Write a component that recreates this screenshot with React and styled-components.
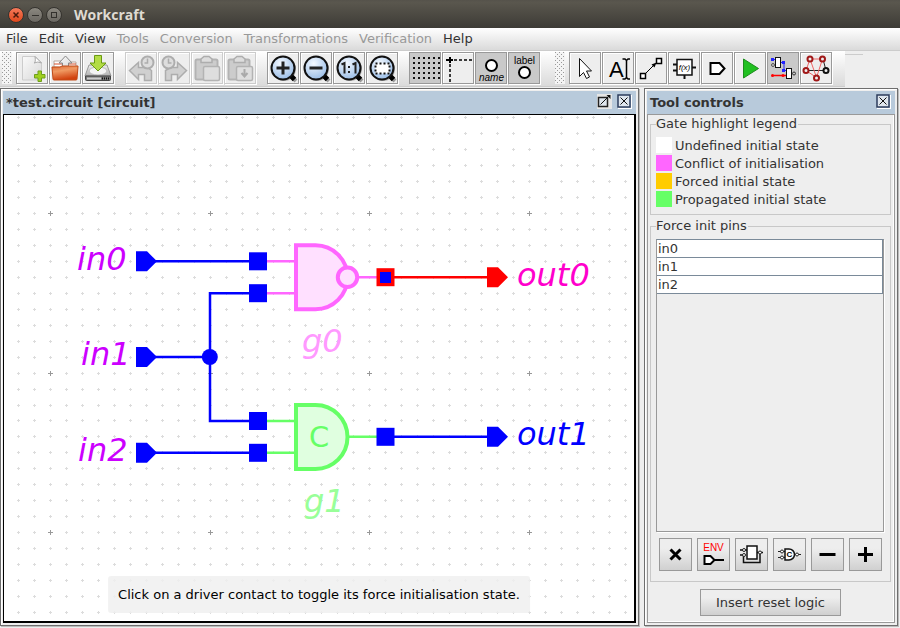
import React from "react";
import styled, { createGlobalStyle, css } from "styled-components";

const GlobalStyle = createGlobalStyle`
  *, *::before, *::after { box-sizing: border-box; }
  html, body { margin: 0; height: 100%; }
  #root { height: 100%; }
  body { font: 13px/16px "DejaVu Sans", sans-serif; color: #333; background: #eee; }
  button { font: inherit; color: inherit; margin: 0; padding: 0; }
`;

const Shell = styled.div`
  display: flex;
  flex-direction: column;
  height: 100vh;
  min-height: 560px;
  overflow: hidden;
`;

/* ---------- title bar ---------- */

const TitleBar = styled.header`
  display: flex;
  align-items: center;
  flex: none;
  height: 28px;
  padding: 1px 8px 0;
  background: linear-gradient(#55524b, #5a574e 8%, #3d3b36);
`;
const WindowControls = styled.div`
  display: flex;
  gap: 3px;
  margin-right: 12px;
`;
const RoundButton = styled.button`
  display: flex;
  width: 16px;
  height: 16px;
  border: 1px solid #35332f;
  border-radius: 50%;
  background: ${(p) => (p.$close ? "linear-gradient(#f5795a, #e0481c)" : "linear-gradient(#8b8880, #6b6862)")};
`;
const AppTitle = styled.h1`
  margin: 0;
  font: bold 14px/20px "Open Sans", "Noto Sans", sans-serif;
  color: #dfdbd2;
`;

/* ---------- menu ---------- */

const MenuBar = styled.nav`
  display: flex;
  flex: none;
  height: 23px;
  padding-left: 1px;
  background: linear-gradient(#fff, #dadada);
  border-bottom: 1px solid #ccc;
`;
const MenuItem = styled.button`
  border: 0;
  padding: 0 6px 0 5px;
  background: none;
  color: #333;
  &:disabled { color: #999; }
`;

/* ---------- tool bars ---------- */

const ToolArea = styled.div`
  display: flex;
  flex: none;
  height: 36px;
  margin-bottom: 1px;
`;
const ToolBar = styled.div`
  display: flex;
  align-items: flex-start;
  height: 36px;
  padding: 1px 13px 0 2px;
  background: linear-gradient(#fff, #dadada);
  border-bottom: 1px solid #ccc;
`;
const ToolRest = styled.div`
  width: 18px;
  height: 4px;
  border-bottom: 1px solid #ccc;
`;
const Grip = styled.div`
  width: 10px;
  height: 32px;
  margin-right: 4px;
  background:
    linear-gradient(#aaa, #aaa) 0 0 / 1px 1px,
    #f4f4f4;
  background:
    conic-gradient(from 270deg at 1px 1px, #999 90deg, transparent 0) 0 0 / 4px 4px,
    conic-gradient(from 270deg at 1px 1px, #999 90deg, transparent 0) 2px 2px / 4px 4px,
    #f4f4f4;
`;
const ToolGroup = styled.div`
  display: flex;
  gap: 1px;
  & + & { margin-left: 11px; }
`;
const ToolButton = styled.button`
  display: block;
  width: 32px;
  height: 32px;
  border: 1px solid #999;
  background: ${(p) => (p.$on ? "#c9c9c9" : "#eee")};
  box-shadow: 1px 1px 0 #fff ${(p) => !p.$on && css`, inset 1px 1px 0 #fff`};
  &:disabled { border-color: #ccc; }
  & > svg { display: block; }
`;

/* ---------- windows ---------- */

const Desktop = styled.main`
  display: flex;
  flex: 1;
  min-height: 0;
  gap: 5px;
  padding: 0 2px 2px 0;
`;
const Pane = styled.section`
  display: flex;
  flex-direction: column;
  min-width: 0;
  flex: ${(p) => (p.$side ? "0 0 254px" : "1")};
  padding: 2px;
  border: 1px solid #6e6e6e;
  background: #eee;
  box-shadow: 1px 1px 0 #bbb, inset 1px 1px 0 #fff;
`;
const PaneHeader = styled.header`
  display: flex;
  align-items: center;
  gap: 5px;
  flex: none;
  height: 23px;
  padding: 0 4px 2px 3px;
  background: #b8cadb;
`;
const PaneTitle = styled.h2`
  flex: 1;
  margin: 0;
  padding-top: 2px;
  font-size: 13px;
  line-height: 18px;
`;
const PaneButton = styled.button`
  width: 15px;
  height: 15px;
  border: 0;
  background: none;
  & > svg { display: block; }
`;
const Canvas = styled.div`
  position: relative;
  flex: 1;
  min-height: 0;
  border: solid #000;
  border-width: 1px 2px 2px 1px;
  background: #fff;
  overflow: hidden;
`;
const Drawing = styled.svg`
  display: block;
  width: 100%;
  height: 100%;
`;
const Label = styled.text`
  font: italic 32px "DejaVu Sans", sans-serif;
`;
const Hint = styled.div`
  position: absolute;
  bottom: 8px;
  left: 50%;
  transform: translateX(-50%);
  padding: 10px 10px 9px;
  border-radius: 3px;
  line-height: 18px;
  white-space: nowrap;
  color: #000;
  background: rgba(240, 240, 240, 0.85);
`;

/* ---------- tool controls ---------- */

const Controls = styled.div`
  display: flex;
  flex-direction: column;
  flex: 1;
  min-height: 0;
  gap: 2px;
  padding: 0 3px 6px 2px;
  border: 1px solid #999;
  box-shadow: inset -1px -1px 0 #fff;
`;
const Group = styled.fieldset`
  display: flex;
  flex-direction: column;
  min-width: 0;
  min-height: 0;
  margin: 0;
  padding: 4px 6px 5px 5px;
  border: 1px solid #c8c8c8;
  ${(p) => p.$grow && css`flex: 1;`}
`;
const GroupTitle = styled.legend`
  padding: 0 1px 0 0;
  line-height: 18px;
`;
const Legend = styled.ul`
  margin: 0;
  padding: 0;
  list-style: none;
`;
const LegendRow = styled.li`
  display: flex;
  gap: 3px;
  height: 18px;
  line-height: 18px;
`;
const Swatch = styled.span`
  width: 16px;
  height: 16px;
  background: ${(p) => p.$color};
`;
const PinList = styled.div`
  flex: 1;
  min-height: 0;
  border: 1px solid #999;
  border-top-color: #7a8a99;
  box-shadow: 1px 1px 0 #fff;
`;
const PinTable = styled.table`
  width: 100%;
  border-spacing: 0;
`;
const PinCell = styled.td`
  height: 18px;
  padding: 1px 1px 0;
  background: #fff;
  border-right: 1px solid #7a8a99;
  border-bottom: 1px solid #7a8a99;
`;
const ActionRow = styled.div`
  display: flex;
  justify-content: center;
  gap: 5px;
  padding: 6px 0 5px;
`;
const Action = styled.button`
  width: 33px;
  height: 33px;
  border: 1px solid #999;
  background: linear-gradient(#eee, #eee 30%, #d0d0d0);
  & > svg { display: block; }
`;
const InsertButton = styled.button`
  align-self: center;
  height: 27px;
  margin-top: 5px;
  padding: 0 15px;
  border: 1px solid #999;
  background: linear-gradient(#eee, #eee 30%, #cfcfcf);
`;

/* ---------- icons ---------- */

const Icon = ({ children }) => (
  <svg width="30" height="30" viewBox="1 1 30 30" fill="none" aria-hidden="true">{children}</svg>
);

const Magnifier = ({ children }) => (
  <Icon>
    <path d="M24 24l5 5" stroke="#999" strokeWidth="4" />
    <circle cx="17" cy="17" r="12" fill="#aaa" />
    <path d="M23 23l4.500 4.500" stroke="#000" strokeWidth="5" />
    <circle cx="16" cy="16" r="11.500" fill="url(#lens)" stroke="#111" strokeWidth="2" />
    {children}
  </Icon>
);

const icons = {
  create: (
    <Icon>
      <path d="M6.500 4.500h13l6 6V28h-19z" fill="url(#paper)" stroke="#ccc" />
      <path d="M19 4.500q1 6-1 6.500 4-2 7.500 0z" fill="#fff" stroke="#aaa" />
      <path d="M22 19h3.500v3.500H29V26h-3.500v3.500H22V26h-3.500v-3.500H22z" fill="#9fd01f" stroke="#6f9f1c" />
    </Icon>
  ),
  open: (
    <Icon>
      <path d="M5 15V9h7l1 1h14v6z" fill="#fff" stroke="#b8a79c" />
      <path d="M5 12h22" stroke="#d9532c" />
      <path d="M13.500 16v-5h-3.500l6.500-7 6.500 7h-3.500v5z" fill="url(#paper)" stroke="#888" />
      <path d="M3 15h8l2-1h16l-1 13q0 1-1 1H5q-1 0-1-1z" fill="url(#folder)" stroke="#c14a17" />
    </Icon>
  ),
  save: (
    <Icon>
      <path d="M7 13h18l4 11H3z" fill="url(#disk)" stroke="#999" />
      <ellipse cx="16" cy="19" rx="9" ry="4" fill="#f4f4f4" stroke="#bbb" />
      <path d="M3.500 24h25v3.500q0 1-1 1h-23q-1 0-1-1z" fill="#777" stroke="#444" />
      <path d="M5 26.500h14" stroke="#ccc" strokeWidth="2" />
      <path d="M20 26.500h7" stroke="#111" strokeWidth="2" strokeDasharray="1 1" />
      <path d="M12.500 3.500h7v7.500h4.500l-8 8-8-8h4.500z" fill="#b3dc45" stroke="#6a9a12" />
    </Icon>
  ),
  undo: (
    <Icon>
      <path d="M4.500 18.500l9-8v5h9l4 3v10h-7v-6h-6v5z" fill="#d0d0d0" stroke="#adadad" strokeWidth="1.500" />
      <circle cx="22.500" cy="10.500" r="6" fill="#ddd" stroke="#adadad" strokeWidth="2" />
      <path d="M22.500 6.500v4.500h-3" stroke="#adadad" strokeWidth="1.500" />
    </Icon>
  ),
  redo: (
    <Icon>
      <path d="M28.500 18.500l-9-8v5h-7l-5 3v10h6v-6h6v5z" fill="#d0d0d0" stroke="#adadad" strokeWidth="1.500" />
      <circle cx="10.500" cy="10.500" r="6" fill="#ddd" stroke="#adadad" strokeWidth="2" />
      <path d="M10.500 6.500v4.500h3" stroke="#adadad" strokeWidth="1.500" />
    </Icon>
  ),
  copy: (
    <Icon>
      <rect x="4.500" y="7.500" width="22" height="20" rx="1.500" fill="#ccc" stroke="#b3b3b3" strokeWidth="2" />
      <path d="M10 10.500V7l3-2.500h5L21 7v3.500z" fill="#ddd" stroke="#adadad" strokeWidth="1.500" />
      <rect x="12.500" y="14.500" width="16" height="14" rx="1.500" fill="#dedede" stroke="#b3b3b3" strokeWidth="1.500" />
    </Icon>
  ),
  paste: (
    <Icon>
      <rect x="4.500" y="7.500" width="21" height="20" rx="1.500" fill="#ccc" stroke="#b3b3b3" strokeWidth="2" />
      <path d="M10 10.500V7l3-2.500h5L21 7v3.500z" fill="#ddd" stroke="#adadad" strokeWidth="1.500" />
      <rect x="12.500" y="14.500" width="16" height="14" rx="1.500" fill="#dedede" stroke="#b3b3b3" strokeWidth="1.500" />
      <path d="M20.500 17v7m-3-3l3 3.500 3-3.500" stroke="#aaa" strokeWidth="2" />
    </Icon>
  ),
  zoomIn: <Magnifier><path d="M9.500 16h13M16 9.500v13" stroke="#222" strokeWidth="3" /></Magnifier>,
  zoomOut: <Magnifier><path d="M9.500 16h13" stroke="#222" strokeWidth="3" /></Magnifier>,
  zoomActual: (
    <Magnifier>
      <path d="M8.500 12.500l3-1.500v10.500M19.500 12.500l3-1.500v10.500" stroke="#222" strokeWidth="2" />
      <path d="M15 14h2v2h-2zM15 19h2v2h-2z" fill="#222" />
    </Magnifier>
  ),
  zoomFit: (
    <Magnifier>
      <rect x="9.500" y="11.500" width="14" height="10" fill="#fff" stroke="#111" strokeWidth="2" strokeDasharray="2 2" />
    </Magnifier>
  ),
  grid: (
    <Icon>
      {[5, 10, 15, 20, 25, 30].map((x) => (
        <path key={x} d={`M${x} 5v25`} stroke="#111" strokeWidth="2" strokeDasharray="2 3" />
      ))}
    </Icon>
  ),
  rulers: (
    <Icon>
      <path d="M12 8h18M8 12v18" stroke="#000" strokeWidth="1.500" strokeDasharray="3 2" />
      <path d="M4 8h7M8 5v6" stroke="#000" strokeWidth="2" />
    </Icon>
  ),
  name: (
    <Icon>
      <circle cx="16.500" cy="13.500" r="5.500" fill="#fff" stroke="#000" strokeWidth="2" />
      <text x="16.500" y="29" textAnchor="middle" fontFamily="Liberation Sans, sans-serif" fontSize="10" fontStyle="italic" fill="#000">name</text>
    </Icon>
  ),
  label: (
    <Icon>
      <circle cx="16.500" cy="20.500" r="5.500" fill="#fff" stroke="#000" strokeWidth="2" />
      <text x="16.500" y="12" textAnchor="middle" fontFamily="Liberation Sans, sans-serif" fontSize="10" fill="#000">label</text>
    </Icon>
  ),
  select: <Icon><path d="M10.500 6.500v18l4-4 3 6 3-1.500-3-6h5z" fill="#fff" stroke="#111" /></Icon>,
  text: (
    <Icon>
      <text x="7" y="25" fontFamily="Liberation Sans, sans-serif" fontSize="22" fill="#000">A</text>
      <path d="M20.500 7h2.500l1.500 1.500L26 7h2M20.500 27h2.500l1.500-1.500L26 27h2M24.500 8v18" stroke="#000" strokeWidth="1.500" />
    </Icon>
  ),
  connect: (
    <Icon>
      <path d="M10 22L23 9" stroke="#000" />
      <path d="M21.500 10.500l-2 5-3-3z" fill="#000" />
      <rect x="5.500" y="21.500" width="5" height="5" fill="#fff" stroke="#000" strokeWidth="1.500" />
      <rect x="21.500" y="6.500" width="5" height="5" fill="#fff" stroke="#000" strokeWidth="1.500" />
    </Icon>
  ),
  component: (
    <Icon>
      <path d="M5 12.500h4M5 18.500h4M24 15.500h4M16.500 23v4" stroke="#111" strokeWidth="2" />
      <rect x="9" y="7.500" width="15" height="15.500" fill="#fff" stroke="#111" strokeWidth="1.500" />
      <text x="16.500" y="18" textAnchor="middle" fontFamily="Liberation Sans, sans-serif" fontSize="8" fontStyle="italic" fill="#000">f(x)</text>
    </Icon>
  ),
  port: <Icon><path d="M9.500 11h9l5 5.500-5 5.500h-9z" fill="#fff" stroke="#000" strokeWidth="2" /></Icon>,
  simulate: <Icon><path d="M9.500 7v19L24.500 16.500z" fill="#20c020" stroke="#1c8c1c" /></Icon>,
  initialise: (
    <Icon>
      <path d="M5.500 7.500h3M14 10.500h3v8h4" stroke="#22f" />
      <path d="M4 6h3v3H4zM15 9h3v3h-3zM15 17h3v3h-3z" fill="#22f" />
      <circle cx="6" cy="13" r="1.500" stroke="#555" />
      <rect x="8.500" y="5.500" width="5" height="10" fill="#fff" stroke="#111" />
      <path d="M5 23.500h14" stroke="red" strokeWidth="1.500" />
      <circle cx="5.500" cy="23.500" r="1.500" fill="red" /><circle cx="16" cy="23.500" r="1.500" fill="red" />
      <rect x="19.500" y="16.500" width="5" height="10" fill="#fff" stroke="#111" />
      <circle cx="27" cy="21.500" r="1.500" stroke="#333" />
    </Icon>
  ),
  cycles: (
    <Icon>
      <path d="M6 18.500h20L23 7" stroke="#222" />
      <path d="M10 7h12.500l-6 18.500L6 18.500 10 7l6.500 18.500" stroke="#e66" />
      <g fill="#eee" stroke="#a01818" strokeWidth="2">
        <circle cx="10" cy="7" r="2.500" /><circle cx="22.500" cy="7" r="2.500" /><circle cx="6" cy="18.500" r="2.500" /><circle cx="16.500" cy="26" r="2.500" />
      </g>
      <circle cx="26" cy="18.500" r="2.500" fill="#eee" stroke="#111" strokeWidth="2" />
    </Icon>
  ),
};

const ActionIcon = ({ children }) => (
  <svg width="31" height="31" viewBox="1 1 31 31" fill="none" aria-hidden="true">{children}</svg>
);

const actions = [
  ["Clear all", <path d="M11.500 11.500l10 10m0-10l-10 10" stroke="#000" strokeWidth="3" />],
  ["Environment", <>
    <text x="16.500" y="13" textAnchor="middle" fontFamily="Liberation Sans, sans-serif" fontSize="10" fill="red">ENV</text>
    <path d="M7.500 18h6l4 4-4 4h-6z" fill="#fff" stroke="#000" strokeWidth="2" />
    <path d="M18 22h9" stroke="#000" strokeWidth="2" />
  </>],
  ["Self loops", <>
    <path d="M5 12h7M5 17h3M8.500 18v6.500H25V15M22 14.500h6" stroke="#111" strokeWidth="1.500" />
    <rect x="12" y="8" width="10" height="13" fill="#fff" stroke="#111" strokeWidth="1.500" />
    <g fill="#fff" stroke="#222"><circle cx="9" cy="12" r="1.500" /><circle cx="9" cy="17" r="1.500" /><circle cx="25" cy="14.500" r="1.500" /></g>
  </>],
  ["Sequential gates", <>
    <path d="M5 13.500h7M5 19.500h7M22 16.500h6" stroke="#222" />
    <path d="M12 11h4a5.500 5.500 0 0 1 0 11h-4z" fill="#fff" stroke="#111" strokeWidth="1.500" />
    <g fill="#fff" stroke="#222"><circle cx="9" cy="13.500" r="1.500" /><circle cx="9" cy="19.500" r="1.500" /><circle cx="24" cy="16.500" r="1.500" /></g>
    <text x="16.500" y="19" textAnchor="middle" fontFamily="Liberation Sans, sans-serif" fontSize="8" fontWeight="bold" fill="#000">C</text>
  </>],
  ["Remove", <path d="M8.500 16.500h16" stroke="#000" strokeWidth="3" />],
  ["Add", <path d="M9 16.500h15m-7.500-7.500v15" stroke="#000" strokeWidth="3" />],
];

const CloseIcon = () => (
  <svg width="15" height="15" fill="none" aria-hidden="true">
    <rect x="1.500" y="1.500" width="13" height="13" stroke="#fff" />
    <rect x="1" y="1" width="12" height="12" fill="#dfe6ee" stroke="#2c3c5c" strokeWidth="1.500" />
    <path d="M3.500 3.500l7 7m0-7l-7 7" stroke="#111" />
  </svg>
);
const DetachIcon = () => (
  <svg width="15" height="15" fill="none" aria-hidden="true">
    <rect width="15" height="15" fill="#e6e6e6" />
    <rect x="1.500" y="3.500" width="9" height="9" fill="#dfe6ee" stroke="#222" strokeWidth="1.500" />
    <path d="M3.500 10.500l9-9" stroke="#111" />
    <path d="M9.500 1h4v4z" fill="#111" />
  </svg>
);

/* ---------- data ---------- */

const menus = [
  ["File", true], ["Edit", true], ["View", true], ["Tools", false],
  ["Conversion", false], ["Transformations", false], ["Verification", false], ["Help", true],
];

const mainTools = [
  [["create", "Create work"], ["open", "Open work"], ["save", "Save work"]],
  [["undo", "Undo", "off"], ["redo", "Redo", "off"], ["copy", "Copy", "off"], ["paste", "Paste", "off"]],
  [["zoomIn", "Zoom in"], ["zoomOut", "Zoom out"], ["zoomActual", "Default zoom"], ["zoomFit", "Zoom to fit"]],
  [["grid", "Show grid", "on"], ["rulers", "Show rulers"], ["name", "Show names", "on"], ["label", "Show labels", "on"]],
];
const modelTools = [[
  ["select", "Selection"], ["text", "Text note"], ["connect", "Connect"], ["component", "Joint or function"],
  ["port", "Port"], ["simulate", "Simulation"], ["initialise", "Initialisation analyser", "on"], ["cycles", "Cycle analyser"],
]];

const legend = [
  ["#ffffff", "Undefined initial state"],
  ["#ff66ff", "Conflict of initialisation"],
  ["#ffcc00", "Forced initial state"],
  ["#66ff66", "Propagated initial state"],
];

const Tools = ({ groups }) => (
  <ToolBar role="toolbar">
    <Grip />
    {groups.map((group, i) => (
      <ToolGroup key={i}>
        {group.map(([id, title, state]) => (
          <ToolButton key={id} title={title} aria-label={title} $on={state === "on"} disabled={state === "off"}>
            {icons[id]}
          </ToolButton>
        ))}
      </ToolGroup>
    ))}
  </ToolBar>
);

/* ---------- circuit ---------- */

const PITCH = 15.96;
const ORIGIN = { x: 46, y: 98 };

function gridPath(arm, major) {
  let d = "";
  for (let i = -10; i < 120; i++) {
    for (let j = -10; j < 70; j++) {
      if ((i % 10 === 0 && j % 10 === 0) !== major) continue;
      const x = Math.round(ORIGIN.x + PITCH * i) + 0.5;
      const y = Math.round(ORIGIN.y + PITCH * j) + 0.5;
      if (x < 0 || y < 0) continue;
      d += `M${x - arm} ${y}h${arm * 2}M${x} ${y - arm}v${arm * 2}`;
    }
  }
  return d;
}
const MINOR = gridPath(1.5, false);
const MAJOR = gridPath(2.5, true);

const Port = ({ x, y, color = "#00f" }) => (
  <path d={`M${x} ${y - 10}h11l10 10-10 10h-11z`} fill={color} />
);
const Contact = ({ x, y }) => <rect x={x - 9} y={y - 9} width="18" height="18" fill="#00f" />;

const Circuit = () => (
  <Drawing role="img" aria-label="Circuit">
    <path d={MINOR} stroke="#dcdcdc" />
    <path d={MAJOR} stroke="#999" />
    <g transform="translate(-4 -115)" fill="none" strokeWidth="2.500">
      <path d="M155 261.300H250M155 357H210M250 293.200H210V421H250M155 452.800H250M394 436.800H490" stroke="#00f" />
      <path d="M394 277.200H490" stroke="#f00" />
      <path d="M267 261.300H296M267 293.200H296M359 277.200H377" stroke="#ff66ff" />
      <path d="M267 421H296M267 452.800H296M349 436.800H377" stroke="#66ff66" />

      <Port x={136} y={261.3} />
      <Port x={136} y={357} />
      <Port x={136} y={452.8} />
      <Port x={487} y={277.2} color="#f00" />
      <Port x={487} y={436.8} />
      <Contact x={258} y={261.3} />
      <Contact x={258} y={293.2} />
      <Contact x={258} y={421} />
      <Contact x={258} y={452.8} />
      <Contact x={385.5} y={436.8} />
      <rect x="376.500" y="268.200" width="18" height="18" fill="#f00" />
      <rect x="380" y="272" width="11" height="11" fill="#00f" />
      <circle cx="209.800" cy="357" r="8" fill="#00f" />

      <path d="M296 245.300H315.500a32 32 0 0 1 0 64H296z" fill="#ffe0ff" stroke="#ff66ff" strokeWidth="4" />
      <circle cx="347.500" cy="277.200" r="9.700" fill="#ffe0ff" stroke="#ff66ff" strokeWidth="4" />
      <path d="M296 405H315.500a32 32 0 0 1 0 64H296z" fill="#e0ffe0" stroke="#66ff66" strokeWidth="4" />
      <text x="309" y="447" fontFamily="DejaVu Sans, sans-serif" fontSize="29" fill="#66ff66">C</text>

      <Label x="77" y="270" fill="#cc00ff">in0</Label>
      <Label x="81" y="365" fill="#cc00ff">in1</Label>
      <Label x="78" y="461" fill="#cc00ff">in2</Label>
      <Label x="517" y="286" fill="#ff00cc">out0</Label>
      <Label x="517" y="445" fill="#0000ff">out1</Label>
      <Label x="302" y="352" fill="#ff99ff">g0</Label>
      <Label x="304" y="512" fill="#99ff99">g1</Label>
    </g>
  </Drawing>
);

const Gradients = () => (
  <defs>
    <radialGradient id="lens" cx="0.4" cy="0.3" r="0.8"><stop offset="0" stopColor="#f4f9ff" /><stop offset="1" stopColor="#8fb6e4" /></radialGradient>
    <linearGradient id="paper" x2="1" y2="1"><stop stopColor="#fafafa" /><stop offset="1" stopColor="#d8d8d8" /></linearGradient>
    <linearGradient id="folder" x2="0.3" y2="1"><stop stopColor="#dd6a35" /><stop offset="0.4" stopColor="#f09a63" /><stop offset="1" stopColor="#d1420f" /></linearGradient>
    <linearGradient id="disk" x2="0" y2="1"><stop stopColor="#eee" /><stop offset="1" stopColor="#b0b0b0" /></linearGradient>
  </defs>
);
const HiddenSvg = styled.svg`
  position: absolute;
  width: 0;
  height: 0;
`;

export default function App() {
  return (
    <Shell>
      <GlobalStyle />
      <HiddenSvg aria-hidden="true"><Gradients /></HiddenSvg>
      <TitleBar>
        <WindowControls>
          <RoundButton $close aria-label="Close">
            <svg width="14" height="14" fill="none"><path d="M4.500 4.500l5 5m0-5l-5 5" stroke="#4a1a0c" strokeWidth="1.500" /></svg>
          </RoundButton>
          <RoundButton aria-label="Minimise">
            <svg width="14" height="14" fill="none"><path d="M4 7.500h7" stroke="#33312d" /></svg>
          </RoundButton>
          <RoundButton aria-label="Maximise">
            <svg width="14" height="14" fill="none"><rect x="4.500" y="4.500" width="5" height="5" stroke="#33312d" /></svg>
          </RoundButton>
        </WindowControls>
        <AppTitle>Workcraft</AppTitle>
      </TitleBar>

      <MenuBar>
        {menus.map(([name, enabled]) => (
          <MenuItem key={name} disabled={!enabled}>{name}</MenuItem>
        ))}
      </MenuBar>

      <ToolArea>
        <Tools groups={mainTools} />
        <Tools groups={modelTools} />
        <ToolRest />
      </ToolArea>

      <Desktop>
        <Pane>
          <PaneHeader>
            <PaneTitle>*test.circuit [circuit]</PaneTitle>
            <PaneButton aria-label="Detach"><DetachIcon /></PaneButton>
            <PaneButton aria-label="Close document"><CloseIcon /></PaneButton>
          </PaneHeader>
          <Canvas>
            <Circuit />
            <Hint>Click on a driver contact to toggle its force initialisation state.</Hint>
          </Canvas>
        </Pane>

        <Pane $side>
          <PaneHeader>
            <PaneTitle>Tool controls</PaneTitle>
            <PaneButton aria-label="Close tool controls"><CloseIcon /></PaneButton>
          </PaneHeader>
          <Controls>
            <Group>
              <GroupTitle>Gate highlight legend</GroupTitle>
              <Legend>
                {legend.map(([color, text]) => (
                  <LegendRow key={text}><Swatch $color={color} />{text}</LegendRow>
                ))}
              </Legend>
            </Group>
            <Group $grow>
              <GroupTitle>Force init pins</GroupTitle>
              <PinList>
                <PinTable>
                  <tbody>
                    {["in0", "in1", "in2"].map((pin) => (
                      <tr key={pin}><PinCell>{pin}</PinCell></tr>
                    ))}
                  </tbody>
                </PinTable>
              </PinList>
              <ActionRow>
                {actions.map(([title, drawing]) => (
                  <Action key={title} title={title} aria-label={title}><ActionIcon>{drawing}</ActionIcon></Action>
                ))}
              </ActionRow>
            </Group>
            <InsertButton>Insert reset logic</InsertButton>
          </Controls>
        </Pane>
      </Desktop>
    </Shell>
  );
}
